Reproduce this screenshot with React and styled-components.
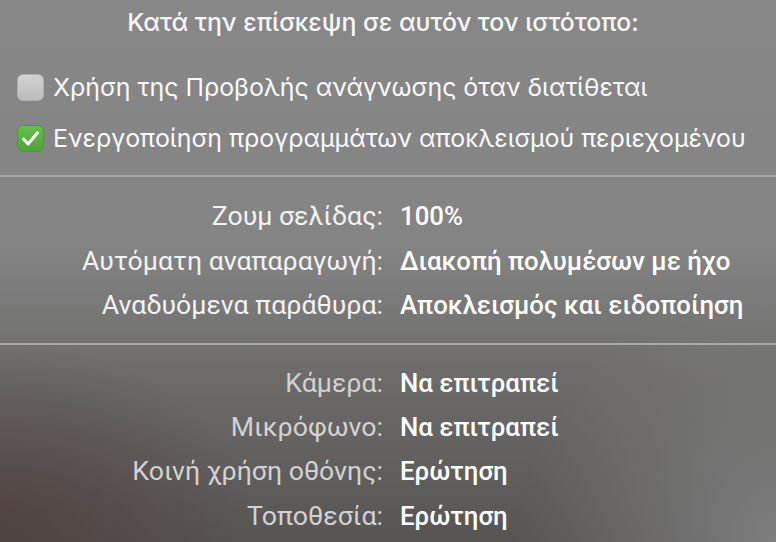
import React from "react";
import styled, { createGlobalStyle } from "styled-components";

const GlobalStyle = createGlobalStyle`
  html, body {
    margin: 0;
    padding: 0;
    background: #5a5856;
  }
`;

const Panel = styled.div`
  width: 776px;
  height: 542px;
  overflow: hidden;
  display: flex;
  flex-direction: column;
  background:
    radial-gradient(ellipse 260px 200px at 0% 100%, rgba(78, 64, 62, 0.9), rgba(78, 64, 62, 0) 100%),
    radial-gradient(ellipse 260px 260px at 100% 100%, rgba(130, 130, 130, 0.9), rgba(130, 130, 130, 0) 100%),
    linear-gradient(180deg, #878787 0%, #848484 45%, #6c6b6a 70%, #575554 100%);
`;

const Title = styled.div`
  height: 44px;
  display: flex;
  align-items: center;
  justify-content: center;
  padding-right: 10px;
  color: #f7f7f7;
  font-family: Inter, "Noto Sans", sans-serif;
  font-size: 24.8px;
  font-weight: 500;
`;

const CheckList = styled.div`
  display: flex;
  flex-direction: column;
  gap: 7px;
  padding: 21px 0 15px 17px;
`;

const CheckRow = styled.label`
  height: 44px;
  display: flex;
  align-items: center;
  gap: 9px;
  color: #fafafa;
  font-family: Inter, "Noto Sans", sans-serif;
  font-size: 24.9px;
  white-space: nowrap;
`;

const Box = styled.span`
  width: 27px;
  height: 27px;
  border-radius: 6px;
  flex-shrink: 0;
  display: flex;
  align-items: center;
  justify-content: center;
  box-sizing: border-box;
  background: ${(p) =>
    p.checked
      ? "linear-gradient(180deg, #66c04a 0%, #4ea33a 100%)"
      : "linear-gradient(180deg, #d2d2d2 0%, #bcbcbc 100%)"};
  border: 1px solid ${(p) => (p.checked ? "#4a9a36" : "#b0b0b0")};
`;

const Divider = styled.div`
  height: 2px;
  background: #a9a9a9;
  flex-shrink: 0;
`;

const Settings = styled.div`
  display: grid;
  grid-template-columns: 383px auto;
  column-gap: 17px;
  grid-auto-rows: ${(p) => p.rowHeight}px;
  align-items: center;
  padding: ${(p) => p.pad};
  font-family: Roboto, "Noto Sans", sans-serif;
  white-space: nowrap;
`;

const Label = styled.div`
  text-align: right;
  font-size: 26.7px;
  color: ${(p) => (p.dim ? "#d2d2d2" : "#f2f2f2")};
`;

const Value = styled.div`
  color: #ffffff;
  font-size: 25.8px;
  font-weight: 500;
`;

const Check = () => (
  <svg width="19" height="17" viewBox="0 0 19 17">
    <path
      d="M2.5 9 L7.2 14 L16.5 2.8"
      fill="none"
      stroke="#fff"
      strokeWidth="3"
      strokeLinecap="round"
      strokeLinejoin="round"
    />
  </svg>
);

const general = [
  ["Ζουμ σελίδας:", "100%"],
  ["Αυτόματη αναπαραγωγή:", "Διακοπή πολυμέσων με ήχο"],
  ["Αναδυόμενα παράθυρα:", "Αποκλεισμός και ειδοποίηση"],
];

const permissions = [
  ["Κάμερα:", "Να επιτραπεί"],
  ["Μικρόφωνο:", "Να επιτραπεί"],
  ["Κοινή χρήση οθόνης:", "Ερώτηση"],
  ["Τοποθεσία:", "Ερώτηση"],
];

export default function App() {
  return (
    <>
      <GlobalStyle />
      <Panel>
        <Title>Κατά την επίσκεψη σε αυτόν τον ιστότοπο:</Title>
        <CheckList>
          <CheckRow>
            <Box />
            Χρήση της Προβολής ανάγνωσης όταν διατίθεται
          </CheckRow>
          <CheckRow>
            <Box checked>
              <Check />
            </Box>
            Ενεργοποίηση προγραμμάτων αποκλεισμού περιεχομένου
          </CheckRow>
        </CheckList>
        <Divider />
        <Settings rowHeight={44.5} pad="17px 0 15px">
          {general.map(([k, v]) => (
            <React.Fragment key={k}>
              <Label>{k}</Label>
              <Value>{v}</Value>
            </React.Fragment>
          ))}
        </Settings>
        <Divider />
        <Settings rowHeight={44.3} pad="16px 0 0">
          {permissions.map(([k, v]) => (
            <React.Fragment key={k}>
              <Label dim>{k}</Label>
              <Value>{v}</Value>
            </React.Fragment>
          ))}
        </Settings>
      </Panel>
    </>
  );
}
